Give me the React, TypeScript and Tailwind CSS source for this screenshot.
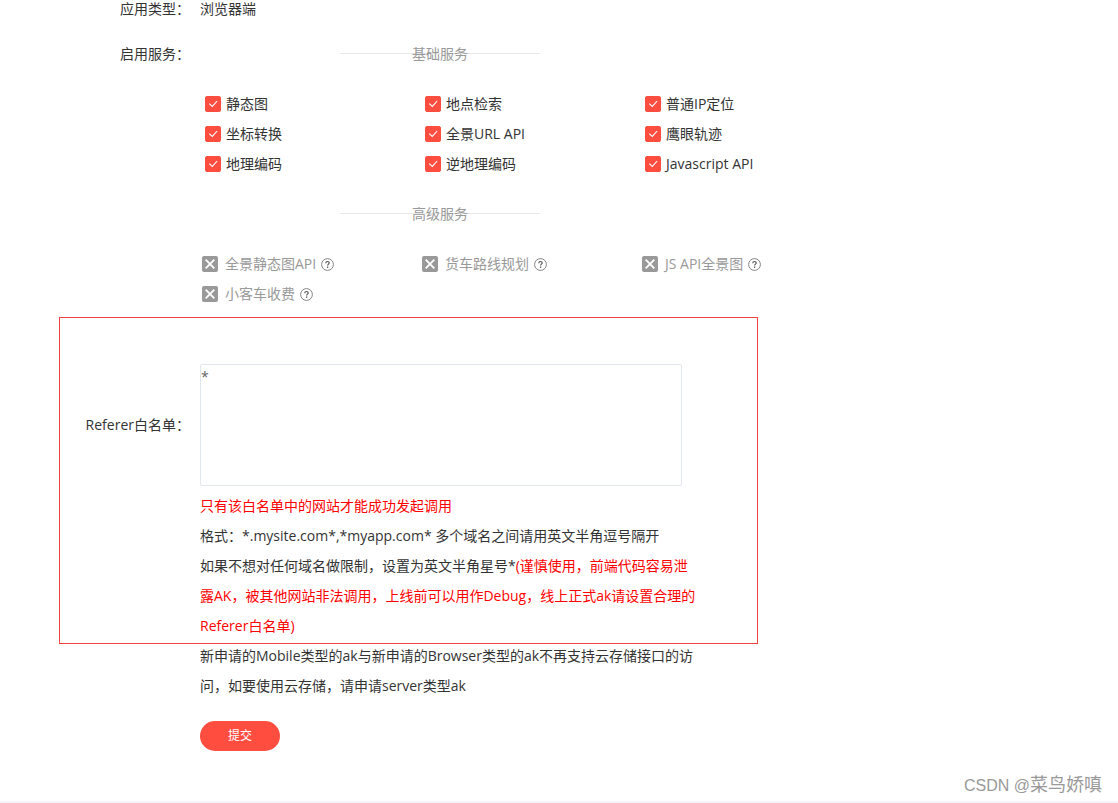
import { useState } from 'react';
import type { FormEvent } from 'react';

interface Service {
  id: string;
  name: string;
}

const BASIC_SERVICES: Service[] = [
  { id: 'static-map', name: '静态图' },
  { id: 'place-search', name: '地点检索' },
  { id: 'ip-location', name: '普通IP定位' },
  { id: 'geoconv', name: '坐标转换' },
  { id: 'pano-url', name: '全景URL API' },
  { id: 'yingyan', name: '鹰眼轨迹' },
  { id: 'geocoding', name: '地理编码' },
  { id: 'reverse-geocoding', name: '逆地理编码' },
  { id: 'js-api', name: 'Javascript API' },
];

const ADVANCED_SERVICES: Service[] = [
  { id: 'pano-static', name: '全景静态图API' },
  { id: 'truck-route', name: '货车路线规划' },
  { id: 'js-pano', name: 'JS API全景图' },
  { id: 'car-toll', name: '小客车收费' },
];

function SectionTitle({ children }: { children: string }) {
  return (
    <div className="relative max-w-[480px] text-center text-[#999]">
      <span className="absolute left-1/2 top-[14px] h-px w-[200px] -translate-x-1/2 bg-[#e8e8e8]" />
      <h2 className="relative">{children}</h2>
    </div>
  );
}

function HelpIcon() {
  return (
    <svg className="ml-[5px] size-[13px] shrink-0" viewBox="0 0 13 13" fill="none" aria-hidden="true">
      <circle cx="6.5" cy="6.5" r="5.9" stroke="#777" strokeWidth="0.9" />
      <path
        d="M4.8 5.3C4.8 4.1 5.5 3.5 6.5 3.5s1.7.6 1.7 1.5c0 1.1-1.6 1.2-1.6 2.5"
        stroke="#555"
        strokeWidth="1.2"
      />
      <path d="M6.6 8.5v1.4" stroke="#555" strokeWidth="1.3" />
    </svg>
  );
}

export default function App() {
  const [enabled, setEnabled] = useState<Record<string, boolean>>(
    Object.fromEntries(BASIC_SERVICES.map(s => [s.id, true]))
  );
  const [whitelist, setWhitelist] = useState('*');

  const toggle = (id: string) => {
    setEnabled(prev => ({ ...prev, [id]: !prev[id] }));
  };

  const handleSubmit = (e: FormEvent) => {
    e.preventDefault();
  };

  return (
    <div className="relative bg-white font-['Open_Sans','Noto_Sans_CJK_SC',sans-serif] text-sm leading-[30px] text-[#333]">
      <form onSubmit={handleSubmit} className="border-b-2 border-[#f5f5fa] pb-[50px]">
        <div className="mb-[21px] flex gap-[10px] leading-[18px]">
          <span className="w-[190px] shrink-0 text-right">应用类型：</span>
          <span>浏览器端</span>
        </div>

        <div className="flex gap-[10px]">
          <span className="w-[190px] shrink-0 text-right">启用服务：</span>
          <div className="max-w-[660px] flex-1">
            <SectionTitle>基础服务</SectionTitle>
            <div className="my-5 grid grid-cols-3">
              {BASIC_SERVICES.map(s => (
                <label key={s.id} className="flex items-center gap-[5px] pl-[5px]">
                  <span className="relative size-4 shrink-0">
                    <input
                      type="checkbox"
                      checked={enabled[s.id]}
                      onChange={() => toggle(s.id)}
                      className="block size-4 appearance-none rounded-xs border border-[#ccc] checked:border-[#ff4d40] checked:bg-[#ff4d40]"
                    />
                    <svg className="pointer-events-none absolute inset-0 size-4" viewBox="0 0 16 16" fill="none">
                      <path d="M4.3 7.6 7.3 10.4 12.2 5" stroke="#fff" strokeWidth="1.1" />
                    </svg>
                  </span>
                  {s.name}
                </label>
              ))}
            </div>

            <SectionTitle>高级服务</SectionTitle>
            <div className="mb-2 mt-5 grid grid-cols-3 text-[#999]">
              {ADVANCED_SERVICES.map(s => (
                <label key={s.id} className="flex items-center pl-[2px]">
                  <span className="relative mr-[7px] size-4 shrink-0">
                    <input type="checkbox" disabled className="block size-4 appearance-none rounded-xs bg-[#999]" />
                    <svg className="pointer-events-none absolute inset-0 size-4" viewBox="0 0 16 16" fill="none">
                      <path d="M3.7 3.7l8.6 8.6M12.3 3.7l-8.6 8.6" stroke="#fff" strokeWidth="1.8" />
                    </svg>
                  </span>
                  {s.name}
                  <HelpIcon />
                </label>
              ))}
            </div>
          </div>
        </div>

        <section className="-mb-[3px] ml-[59px] max-w-[699px] border border-[#f04040] pb-[2px] pt-[46px]">
          <div className="flex items-center gap-[10px]">
            <label htmlFor="referer" className="w-[130px] shrink-0 text-right">
              Referer白名单：
            </label>
            <textarea
              id="referer"
              value={whitelist}
              onChange={e => setWhitelist(e.target.value)}
              className="block h-[122px] w-[482px] resize-none rounded-xs border border-[#e2e6ed] leading-6 text-[#666] outline-none"
            />
          </div>
          <div className="ml-[140px] mt-[5px] max-w-[500px]">
            <p className="text-[#f00]">只有该白名单中的网站才能成功发起调用</p>
            <p>格式：*.mysite.com*,*myapp.com* 多个域名之间请用英文半角逗号隔开</p>
            <p>
              如果不想对任何域名做限制，设置为英文半角星号*
              <span className="text-[#f00]">
                (谨慎使用，前端代码容易泄露AK，被其他网站非法调用，上线前可以用作Debug，线上正式ak请设置合理的Referer白名单)
              </span>
            </p>
          </div>
        </section>

        <div className="ml-[200px] max-w-[500px]">
          <p>新申请的Mobile类型的ak与新申请的Browser类型的ak不再支持云存储接口的访问，如要使用云存储，请申请server类型ak</p>
          <button type="submit" className="mt-5 block h-[30px] w-20 rounded-full bg-[#ff4d40] text-xs text-white">
            提交
          </button>
        </div>
      </form>

      <span className="absolute bottom-1 right-4 font-['Liberation_Sans','Noto_Sans_CJK_SC',sans-serif] text-base text-[#999]">
        CSDN @<span className="text-lg">菜鸟娇嗔</span>
      </span>
    </div>
  );
}
